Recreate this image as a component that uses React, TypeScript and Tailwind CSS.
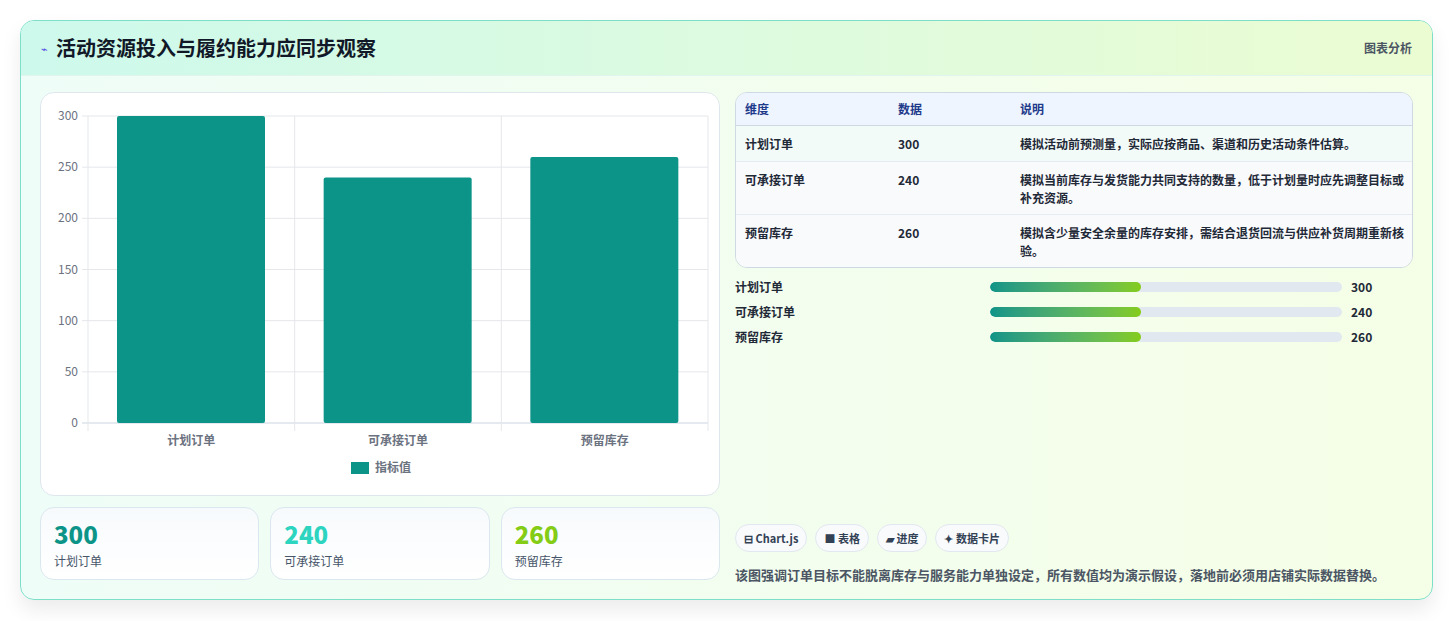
const F = { fontFamily: '"Noto Sans CJK SC","Noto Sans",sans-serif' };

function Chart() {
  const x0 = 47, x1 = 667, yTop = 23, yBot = 330;
  const ticks = [0, 50, 100, 150, 200, 250, 300];
  const y = (v: number) => yBot - (v / 300) * (yBot - yTop);
  const cats = [["计划订单", 300], ["可承接订单", 240], ["预留库存", 260]] as const;
  const w = (x1 - x0) / 3;
  return (
    <svg width="680" height="404" className="block">
      {ticks.map((t) => (
        <g key={t}>
          <line x1={x0 - 6} x2={x1} y1={y(t)} y2={y(t)} stroke={t === 0 ? "#cbd5e1" : "#e5e7eb"} />
          <text x={x0 - 10} y={y(t) + 4} textAnchor="end" fontSize="12" fill="#6b7280" style={F}>{t}</text>
        </g>
      ))}
      {[0, 1, 2, 3].map((i) => (
        <line key={i} x1={x0 + i * w} x2={x0 + i * w} y1={yTop} y2={yBot + 8} stroke="#e5e7eb" />
      ))}
      {cats.map(([n, v], i) => (
        <g key={n}>
          <rect x={x0 + i * w + 29} y={y(v)} width={148} height={yBot - y(v)} rx="2" fill="#0d9488" />
          <text x={x0 + i * w + w / 2} y={352} textAnchor="middle" fontSize="12" fontWeight="600" fill="#6b7280" style={F}>{n}</text>
        </g>
      ))}
      <rect x="310" y="369" width="18" height="12" fill="#0d9488" />
      <text x="334" y="379" fontSize="12" fontWeight="600" fill="#6b7280" style={F}>指标值</text>
    </svg>
  );
}

export default function App() {
  const rows = [
    ["计划订单", "300", "模拟活动前预测量，实际应按商品、渠道和历史活动条件估算。"],
    ["可承接订单", "240", "模拟当前库存与发货能力共同支持的数量，低于计划量时应先调整目标或补充资源。"],
    ["预留库存", "260", "模拟含少量安全余量的库存安排，需结合退货回流与供应补货周期重新核验。"],
  ];
  return (
    <div className="w-[1453px] h-[621px] bg-white overflow-hidden" style={F}>
      <div className="pt-[20px] px-[20px]">
        <div className="h-[580px] rounded-[14px] border border-[#7edfc9] overflow-hidden bg-gradient-to-r from-[#effdf8] to-[#f5fee6] shadow-[0_10px_20px_rgba(0,0,0,0.08)] flex flex-col">
          <div className="h-[55px] flex items-center justify-between px-[20px] bg-gradient-to-r from-[#cdf9ec] to-[#ebfcd2] border-b border-[#e0f5ee]">
            <div className="flex items-center gap-[8px]">
              <span className="text-[11px] text-[#4f46e5]">⌁</span>
              <span className="text-[20px] font-bold text-[#111827]">活动资源投入与履约能力应同步观察</span>
            </div>
            <span className="text-[12px] font-semibold text-[#4b5563]">图表分析</span>
          </div>
          <div className="flex gap-[15px] px-[19px] pt-[16px]">
            <div className="w-[680px] flex flex-col gap-[11px]">
              <div className="h-[404px] rounded-[14px] bg-white border border-[#dfe7ec]"><Chart /></div>
              <div className="grid grid-cols-3 gap-[11px]">
                {[["300", "text-[#0d9488]", "计划订单"], ["240", "text-[#2dd4bf]", "可承接订单"], ["260", "text-[#84cc16]", "预留库存"]].map(([v, c, n]) => (
                  <div key={n} className="h-[73px] rounded-[14px] border border-[#dbe7ef] bg-gradient-to-b from-[#f7fafc] to-white px-[13px] pt-[12px]">
                    <div className={`text-[24px] font-extrabold leading-[28px] ${c}`}>{v}</div>
                    <div className="text-[12px] text-[#475569] mt-[4px]">{n}</div>
                  </div>
                ))}
              </div>
            </div>
            <div className="w-[680px] flex flex-col">
              <div className="rounded-[12px] border border-[#cfd9e3] overflow-hidden text-[12px] font-semibold text-[#1f2937]">
                <div className="h-[33px] flex items-center bg-[#eef5ff] text-[#1e3a8a] border-b border-[#cfd9e3]">
                  <div className="w-[162px] pl-[9px]">维度</div><div className="w-[122px]">数据</div><div>说明</div>
                </div>
                {rows.map(([a, b, c], i) => (
                  <div key={a} className={`flex items-start ${i === 0 ? "bg-[#f3fbf9] h-[35px] pt-[9px]" : "bg-[#f8fafc] h-[53px] pt-[9px] border-t border-[#e5ebf1]"}`}>
                    <div className="w-[162px] pl-[9px] leading-[18px]">{a}</div>
                    <div className="w-[122px] leading-[18px]">{b}</div>
                    <div className="flex-1 pr-[8px] leading-[18px]">{c}</div>
                  </div>
                ))}
              </div>
              <div className="mt-[10px] flex flex-col gap-[7px]">
                {[["计划订单", "300"], ["可承接订单", "240"], ["预留库存", "260"]].map(([n, v]) => (
                  <div key={n} className="h-[18px] flex items-center text-[12px] font-semibold text-[#1f2937]">
                    <div className="w-[255px]">{n}</div>
                    <div className="w-[352px] h-[10px] rounded-full bg-[#e2e8f0] overflow-hidden">
                      <div className="w-[43%] h-full rounded-full bg-gradient-to-r from-[#0d9488] to-[#84cc16]" />
                    </div>
                    <div className="ml-[9px] font-bold">{v}</div>
                  </div>
                ))}
              </div>
              <div className="mt-[178px] flex gap-[8px]">
                {["⊟ Chart.js", "■ 表格", "▰ 进度", "✦ 数据卡片"].map((t) => (
                  <div key={t} className="h-[28px] px-[8px] rounded-full border border-[#e2e8f0] bg-[#f8fafc] flex items-center text-[11px] font-semibold text-[#334155]">{t}</div>
                ))}
              </div>
              <div className="mt-[13px] text-[13px] font-semibold text-[#4b5563]">该图强调订单目标不能脱离库存与服务能力单独设定，所有数值均为演示假设，落地前必须用店铺实际数据替换。</div>
            </div>
          </div>
        </div>
      </div>
    </div>
  );
}
